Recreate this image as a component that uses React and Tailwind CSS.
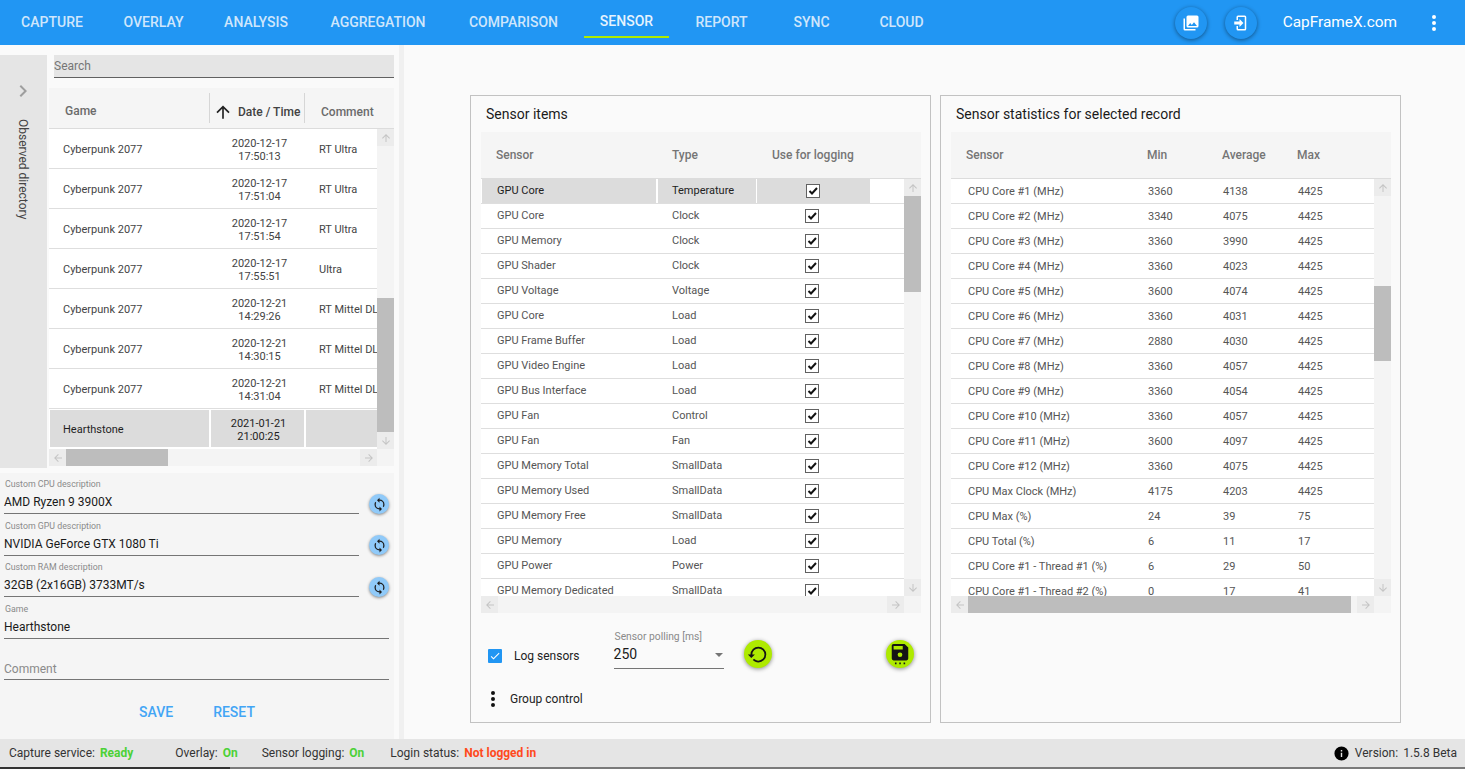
import React from "react";

const ROBOTO = { fontFamily: "Roboto, sans-serif" };

const Icon = ({ d, size = 24, className = "" }) => (
  <svg width={size} height={size} viewBox="0 0 24 24" fill="currentColor" className={className}>
    <path d={d} />
  </svg>
);

const icons = {
  gallery: "M22,16V4A2,2 0 0,0 20,2H8A2,2 0 0,0 6,4V16A2,2 0 0,0 8,18H20A2,2 0 0,0 22,16M11,12L13.03,14.71L16,11L20,16H8M2,6V20A2,2 0 0,0 4,22H18V20H4V6",
  login: "M10,17.25V14H3V10H10V6.75L15.25,12L10,17.25M8,2H17A2,2 0 0,1 19,4V20A2,2 0 0,1 17,22H8A2,2 0 0,1 6,20V16H8V20H17V4H8V8H6V4A2,2 0 0,1 8,2Z",
  dots: "M12,16A2,2 0 0,1 14,18A2,2 0 0,1 12,20A2,2 0 0,1 10,18A2,2 0 0,1 12,16M12,10A2,2 0 0,1 14,12A2,2 0 0,1 12,14A2,2 0 0,1 10,12A2,2 0 0,1 12,10M12,4A2,2 0 0,1 14,6A2,2 0 0,1 12,8A2,2 0 0,1 10,6A2,2 0 0,1 12,4Z",
  sync: "M12,18A6,6 0 0,1 6,12C6,11 6.25,10.03 6.7,9.2L5.24,7.74C4.46,8.97 4,10.43 4,12A8,8 0 0,0 12,20V23L16,19L12,15M12,4V1L8,5L12,9V6A6,6 0 0,1 18,12C18,13 17.75,13.97 17.3,14.8L18.76,16.26C19.54,15.03 20,13.57 20,12A8,8 0 0,0 12,4Z",
  restore: "M13,3A9,9 0 0,0 4,12H1L4.89,15.89L4.96,16.03L9,12H6A7,7 0 0,1 13,5A7,7 0 0,1 20,12A7,7 0 0,1 13,19C11.07,19 9.32,18.21 8.06,16.94L6.64,18.36C8.27,20 10.5,21 13,21A9,9 0 0,0 22,12A9,9 0 0,0 13,3",
  save: "M15,7H5V3.4H15M12,15.4A2.6,2.6 0 0,1 9.4,12.9A2.6,2.6 0 0,1 12,10.3A2.6,2.6 0 0,1 14.6,12.9A2.6,2.6 0 0,1 12,15.4M17,1H5C3.89,1 3,1.9 3,3V17A2,2 0 0,0 5,19H19A2,2 0 0,0 21,17V5L17,1ZM6.5,21.4H8.2V23.2H6.5ZM11.2,21.4H12.9V23.2H11.2ZM15.9,21.4H17.6V23.2H15.9Z",
  info: "M13,9H11V7H13M13,17H11V11H13M12,2A10,10 0 0,0 2,12A10,10 0 0,0 12,22A10,10 0 0,0 22,12A10,10 0 0,0 12,2Z",
  up: "M13,20H11V8L5.5,13.5L4.08,12.08L12,4.16L19.92,12.08L18.5,13.5L13,8V20Z",
  down: "M11,4H13V16L18.5,10.5L19.92,11.92L12,19.84L4.08,11.92L5.5,10.5L11,16V4Z",
  left: "M20,11V13H8L13.5,18.5L12.08,19.92L4.16,12L12.08,4.08L13.5,5.5L8,11H20Z",
  right: "M4,11V13H16L10.5,18.5L11.92,19.92L19.84,12L11.92,4.08L10.5,5.5L16,11H4Z",
  check: "M21,7L9,19L3.5,13.5L4.91,12.09L9,16.17L19.59,5.59L21,7Z",
  chevron: "M8.59,16.58L13.17,12L8.59,7.41L10,6L16,12L10,18L8.59,16.58Z",
};

const tabs = [
  ["CAPTURE", "w-[92px]"],
  ["OVERLAY", "w-[91px]"],
  ["ANALYSIS", "w-[94px]"],
  ["AGGREGATION", "w-[130px]"],
  ["COMPARISON", "w-[121px]"],
  ["SENSOR", "w-[85px]"],
  ["REPORT", "w-[85px]"],
  ["SYNC", "w-[75px]"],
  ["CLOUD", "w-[85px]"],
];

const records = [
  ["Cyberpunk 2077", "2020-12-17", "17:50:13", "RT Ultra"],
  ["Cyberpunk 2077", "2020-12-17", "17:51:04", "RT Ultra"],
  ["Cyberpunk 2077", "2020-12-17", "17:51:54", "RT Ultra"],
  ["Cyberpunk 2077", "2020-12-17", "17:55:51", "Ultra"],
  ["Cyberpunk 2077", "2020-12-21", "14:29:26", "RT Mittel DLSS"],
  ["Cyberpunk 2077", "2020-12-21", "14:30:15", "RT Mittel DLSS"],
  ["Cyberpunk 2077", "2020-12-21", "14:31:04", "RT Mittel DLSS"],
];

const sensorItems = [
  ["GPU Core", "Clock"],
  ["GPU Memory", "Clock"],
  ["GPU Shader", "Clock"],
  ["GPU Voltage", "Voltage"],
  ["GPU Core", "Load"],
  ["GPU Frame Buffer", "Load"],
  ["GPU Video Engine", "Load"],
  ["GPU Bus Interface", "Load"],
  ["GPU Fan", "Control"],
  ["GPU Fan", "Fan"],
  ["GPU Memory Total", "SmallData"],
  ["GPU Memory Used", "SmallData"],
  ["GPU Memory Free", "SmallData"],
  ["GPU Memory", "Load"],
  ["GPU Power", "Power"],
  ["GPU Memory Dedicated", "SmallData"],
];

const stats = [
  ["CPU Core #1 (MHz)", 3360, 4138, 4425],
  ["CPU Core #2 (MHz)", 3340, 4075, 4425],
  ["CPU Core #3 (MHz)", 3360, 3990, 4425],
  ["CPU Core #4 (MHz)", 3360, 4023, 4425],
  ["CPU Core #5 (MHz)", 3600, 4074, 4425],
  ["CPU Core #6 (MHz)", 3360, 4031, 4425],
  ["CPU Core #7 (MHz)", 2880, 4030, 4425],
  ["CPU Core #8 (MHz)", 3360, 4057, 4425],
  ["CPU Core #9 (MHz)", 3360, 4054, 4425],
  ["CPU Core #10 (MHz)", 3360, 4057, 4425],
  ["CPU Core #11 (MHz)", 3600, 4097, 4425],
  ["CPU Core #12 (MHz)", 3360, 4075, 4425],
  ["CPU Max Clock (MHz)", 4175, 4203, 4425],
  ["CPU Max (%)", 24, 39, 75],
  ["CPU Total (%)", 6, 11, 17],
  ["CPU Core #1 - Thread #1 (%)", 6, 29, 50],
  ["CPU Core #1 - Thread #2 (%)", 0, 17, 41],
];

const ArrowBox = ({ dir }) => (
  <div className="w-[17px] h-[17px] shrink-0 flex items-center justify-center text-[#c4c4c4] bg-[#ececec]">
    <Icon d={icons[dir]} size={12} />
  </div>
);

// vertical scrollbar: spacers are heights above and below the thumb
const VScroll = ({ before, thumb, after }) => (
  <div className="w-[17px] shrink-0 h-full flex flex-col bg-[#f4f4f4]">
    <ArrowBox dir="up" />
    <div style={{ height: before }} />
    <div className="bg-[#bdbdbd]" style={{ height: thumb }} />
    <div style={{ height: after }} />
    <ArrowBox dir="down" />
  </div>
);

const HScroll = ({ before, thumb, after }) => (
  <div className="h-[17px] flex bg-[#f4f4f4]">
    <ArrowBox dir="left" />
    <div style={{ width: before }} />
    <div className="bg-[#bdbdbd] h-full" style={{ width: thumb }} />
    <div style={{ width: after }} />
    <ArrowBox dir="right" />
  </div>
);

const Field = ({ label, value, line = "w-[355px]", sync, btnTop = "top-[16px]", className = "" }) => (
  <div className={`relative ${className}`}>
    <div className="text-[8.8px] leading-[12px] text-[#8a8a8a] pl-px">{label}</div>
    <div className={`${line} h-[21px] mt-[3px] text-[12px] leading-[18px] text-[#1a1a1a] border-b border-[#757575]`}>{value}</div>
    {sync && (
      <button className={`absolute left-[365px] ${btnTop} w-5 h-5 rounded-full bg-[#90caf9] flex items-center justify-center text-[#1c1c1c] shadow-[0_1px_3px_rgba(0,0,0,0.45)]`}>
        <Icon d={icons.sync} size={15} />
      </button>
    )}
  </div>
);

const CheckBox = () => (
  <div className="w-[14px] h-[14px] bg-white border border-[#616161] flex items-center justify-center">
    <svg width="12" height="12" viewBox="0 0 12 12" fill="none" stroke="#111" strokeWidth="2">
      <path d="M2.5,6 L5,8.5 L10,3" />
    </svg>
  </div>
);

const FabGreen = ({ d, size }) => (
  <button className="w-7 h-7 rounded-full bg-[#aeea00] flex items-center justify-center text-[#141414] shadow-[0_1px_4px_rgba(0,0,0,0.45)]">
    <Icon d={d} size={size} />
  </button>
);

const Status = ({ label, value, color, className = "" }) => (
  <div className={`flex gap-[5px] ${className}`}>
    <span>{label}</span>
    <span className={`font-bold ${color}`}>{value}</span>
  </div>
);

export default function App() {
  return (
    <div className="w-[1465px] h-[769px] flex flex-col overflow-hidden bg-[#fafafa]" style={ROBOTO}>
      <header className="h-[45px] shrink-0 bg-[#2196f3] flex items-center pl-[6px] text-white">
        <nav className="flex gap-[10px] h-full">
          {tabs.map(([t, w]) => (
            <div
              key={t}
              className={`${w} h-[38px] pt-[7px] flex items-center justify-center text-[14px] font-medium whitespace-nowrap ${
                t === "SENSOR" ? "border-b-2 border-[#aeea00] text-[#e6f3fe]" : "text-[#cfe6fc]"
              }`}
            >
              {t}
            </div>
          ))}
        </nav>
        <div className="ml-auto flex items-center">
          <button className="w-8 h-8 rounded-full bg-[#2196f3] flex items-center justify-center shadow-[0_1px_4px_rgba(0,0,0,0.45)]">
            <Icon d={icons.gallery} size={18} />
          </button>
          <button className="w-8 h-8 rounded-full bg-[#2196f3] flex items-center justify-center ml-[18px] shadow-[0_1px_4px_rgba(0,0,0,0.45)]">
            <Icon d={icons.login} size={18} />
          </button>
          <span className="ml-[26px] mt-px text-[15.4px]">CapFrameX.com</span>
          <Icon d={icons.dots} size={24} className="ml-[25px] mr-[19px]" />
        </div>
      </header>

      <main className="h-[694px] flex">
        {/* left pane */}
        <div className="w-[394px] shrink-0 flex flex-col pt-[10px]">
          <div className="flex h-[413px]">
            <div className="w-[47px] shrink-0 bg-[#e5e5e5] flex flex-col items-center pr-[1px] pt-[24px] text-[#9e9e9e]">
              <Icon d={icons.chevron} size={24} />
              <span className="mt-[16px] text-[12px] text-[#444] [writing-mode:vertical-rl] whitespace-nowrap">Observed directory</span>
            </div>
            <div className="w-[347px] ml-[2px] flex flex-col min-w-0">
              <div className="ml-[5px] h-[23px] bg-[#e5e5e5] border-b border-[#616161] text-[12px] leading-[22px] text-[#757575]">Search</div>
              <div className="mt-[10px] flex h-[41px] pt-[5px] bg-[#f5f5f5] border-b border-[#dcdcdc] text-[12px] font-medium text-[#6b6b6b]">
                <div className="w-[160px] pl-4 flex items-center">Game</div>
                <div className="w-[95px] h-[30px] pt-[7px] flex items-center border-l border-[#d6d6d6] text-[#424242]">
                  <Icon d={icons.up} size={20} className="ml-[3px] text-[#222]" />
                  <span className="ml-[5px] whitespace-nowrap">Date / Time</span>
                </div>
                <div className="flex-1 h-[30px] pt-[7px] flex items-center border-l border-[#d6d6d6] pl-4">Comment</div>
              </div>
              <div className="flex h-[320px]">
                <div className="w-[328px] overflow-hidden bg-white text-[11px] text-[#444]">
                  {records.map((r, i) => (
                    <div key={i} className="h-[40px] pt-[3px] flex items-center border-b border-[#dedede] whitespace-nowrap">
                      <div className="w-[161px] shrink-0 pl-[14px] pt-px">{r[0]}</div>
                      <div className="w-[95px] shrink-0 pl-[4px] text-center leading-[13px]">
                        {r[1]}
                        <br />
                        {r[2]}
                      </div>
                      <div className="pl-[14px] pt-px">{r[3]}</div>
                    </div>
                  ))}
                  <div className="h-[37px] mt-px ml-px flex gap-[2px] text-[#1f1f1f]">
                    <div className="w-[159px] bg-[#dcdcdc] pl-[13px] pt-[4px] flex items-center">Hearthstone</div>
                    <div className="w-[93px] bg-[#dcdcdc] pl-[2px] pt-[3px] text-center leading-[13px] flex items-center justify-center">
                      2021-01-21
                      <br />
                      21:00:25
                    </div>
                    <div className="flex-1 bg-[#dcdcdc]" />
                  </div>
                </div>
                <VScroll before={152} thumb={134} after={0} />
              </div>
              <div className="flex h-[17px]">
                <div className="w-[328px]">
                  <HScroll before={0} thumb={102} after={192} />
                </div>
                <div className="w-[17px] bg-[#f4f4f4]" />
              </div>
            </div>
          </div>

          <div className="mt-[5px] flex-1 bg-[#f5f5f5] pl-1 pt-[5px]">
            <Field label="Custom CPU description" value="AMD Ryzen 9 3900X" sync btnTop="top-[16px]" className="h-[42px]" />
            <Field label="Custom GPU description" value="NVIDIA GeForce GTX 1080 Ti" sync btnTop="top-[15px]" className="h-[41px]" />
            <Field label="Custom RAM description" value="32GB (2x16GB) 3733MT/s" sync btnTop="top-[16px]" className="h-[42px]" />
            <Field label="Game" value="Hearthstone" line="w-[385px]" className="h-[41px]" />
            <div className="w-[385px] h-[22px] mt-[14px] border-b border-[#757575] text-[12px] leading-[22px] text-[#8a8a8a]">Comment</div>
            <div className="flex mt-[22px] ml-[135px] gap-[40px] text-[14px] font-medium text-[#42a5f5]">
              <span>SAVE</span>
              <span>RESET</span>
            </div>
          </div>
        </div>

        <div className="w-[5px] ml-[5px] mr-[66px] shrink-0 bg-[#f0f0f0]" />

        {/* sensor panels */}
        <div className="flex gap-[9px] pt-[50px] h-[678px]">
          <section className="w-[461px] border border-[#c2c2c2] pt-[9px] pl-[10px] pr-[9px] flex flex-col">
            <h2 className="h-[27px] pl-[5px] text-[14px] leading-[18px] text-[#1a1a1a]">Sensor items</h2>
            <div className="h-[47px] bg-[#f5f5f5] border-b border-[#dcdcdc] flex items-center text-[12px] font-medium text-[#757575]">
              <span className="w-[191px] pl-[15px]">Sensor</span>
              <span className="w-[100px]">Type</span>
              <span>Use for logging</span>
            </div>
            <div className="flex h-[417px]">
              <div className="w-[423px] overflow-hidden bg-white text-[11px] text-[#555]">
                <div className="h-[25px] flex border-b border-[#dedede] text-[#222]">
                  <div className="w-[174px] ml-px bg-[#dcdcdc] pl-[15px] flex items-center">GPU Core</div>
                  <div className="w-[98px] ml-[2px] bg-[#dcdcdc] pl-[14px] flex items-center">Temperature</div>
                  <div className="w-[113px] ml-px bg-[#dcdcdc] flex items-center pl-[49px]">
                    <CheckBox />
                  </div>
                </div>
                {sensorItems.map((r, i) => (
                  <div key={i} className="h-[25px] flex items-center border-b border-[#dedede]">
                    <span className="w-[191px] pl-4">{r[0]}</span>
                    <span className="w-[133px]">{r[1]}</span>
                    <CheckBox />
                  </div>
                ))}
              </div>
              <VScroll before={0} thumb={96} after={287} />
            </div>
            <div className="flex h-[17px] shrink-0">
              <div className="w-[423px]">
                <HScroll before={0} thumb={0} after={389} />
              </div>
              <div className="w-[17px] bg-[#f4f4f4]" />
            </div>

            <div className="flex items-center h-[56px] mt-[12px] pl-[7px]">
              <div className="w-[14px] h-[14px] rounded-[1px] bg-[#2196f3] text-white flex items-center justify-center mt-[5px]">
                <Icon d={icons.check} size={12} />
              </div>
              <span className="ml-[12px] mt-[5px] text-[12px] text-[#222]">Log sensors</span>
              <div className="ml-[34px] w-[110px] self-start">
                <div className="pl-px pt-[5px] text-[10.3px] leading-[13px] text-[#8a8a8a]">Sensor polling [ms]</div>
                <div className="h-[26px] pb-[2px] flex items-center justify-between border-b border-[#757575] text-[14px] text-[#1a1a1a]">
                  <span>250</span>
                  <span className="w-0 h-0 mr-[1px] border-x-[4px] border-x-transparent border-t-[4px] border-t-[#757575]" />
                </div>
              </div>
              <div className="ml-[20px] mt-[2px]">
                <FabGreen d={icons.restore} size={21} />
              </div>
              <div className="ml-auto mr-[7px] mt-[2px]">
                <FabGreen d={icons.save} size={22} />
              </div>
            </div>
            <div className="flex items-center mt-[6px] text-[12px] text-[#222]">
              <Icon d={icons.dots} size={24} className="text-[#111]" />
              <span className="ml-[5px]">Group control</span>
            </div>
          </section>

          <section className="w-[461px] border border-[#c2c2c2] pt-[9px] pl-[10px] pr-[9px] flex flex-col">
            <h2 className="h-[27px] pl-[5px] text-[14px] leading-[18px] text-[#1a1a1a]">Sensor statistics for selected record</h2>
            <div className="h-[47px] bg-[#f5f5f5] border-b border-[#dcdcdc] flex items-center text-[12px] font-medium text-[#757575]">
              <span className="w-[196px] pl-[15px]">Sensor</span>
              <span className="w-[75px]">Min</span>
              <span className="w-[75px]">Average</span>
              <span>Max</span>
            </div>
            <div className="flex h-[417px]">
              <div className="w-[423px] overflow-hidden bg-white text-[11px] text-[#555]">
                {stats.map((r) => (
                  <div key={r[0]} className="h-[25px] pt-[2px] flex items-center border-b border-[#dedede]">
                    <span className="w-[197px] pl-[17px]">{r[0]}</span>
                    <span className="w-[75px]">{r[1]}</span>
                    <span className="w-[75px]">{r[2]}</span>
                    <span>{r[3]}</span>
                  </div>
                ))}
              </div>
              <VScroll before={90} thumb={75} after={218} />
            </div>
            <div className="flex h-[17px] shrink-0">
              <div className="w-[423px]">
                <HScroll before={0} thumb={383} after={6} />
              </div>
              <div className="w-[17px] bg-[#f4f4f4]" />
            </div>
          </section>
        </div>
      </main>

      <footer className="h-[30px] shrink-0 bg-[#e5e5e5] flex flex-col text-[12px] text-[#333]">
        <div className="flex-1 flex items-center pl-[9px] pr-[8px]">
          <Status label="Capture service:" value="Ready" color="text-[#4cd137]" />
          <Status label="Overlay:" value="On" color="text-[#4cd137]" className="ml-[42px]" />
          <Status label="Sensor logging:" value="On" color="text-[#4cd137]" className="ml-[24px]" />
          <Status label="Login status:" value="Not logged in" color="text-[#ff4a1c]" className="ml-[26px]" />
          <div className="ml-auto flex items-center">
            <Icon d={icons.info} size={17} className="text-black" />
            <span className="ml-[5px]">Version:</span>
            <span className="ml-[5px]">1.5.8 Beta</span>
          </div>
        </div>
        <div className="h-[2px] bg-[#7a7a7a]">
          <div className="w-[230px] h-full bg-[#333]" />
        </div>
      </footer>
    </div>
  );
}
